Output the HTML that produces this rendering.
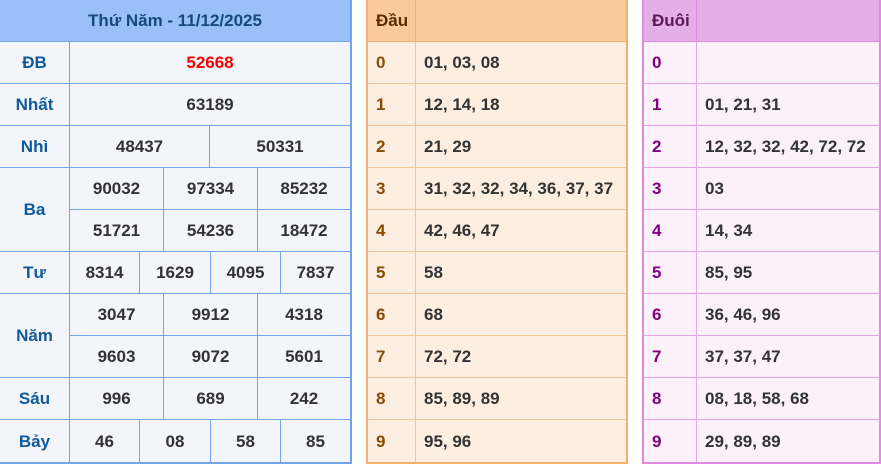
<!DOCTYPE html>
<html><head><meta charset="utf-8"><style>
*{margin:0;padding:0;box-sizing:border-box}
body{width:881px;height:464px;background:#fff;position:relative;overflow:hidden;font-family:"Liberation Sans",Arial,sans-serif;font-weight:bold;font-size:17px;color:#333}
.c{position:absolute;display:flex;align-items:center;justify-content:center;height:42px;border-bottom:1px solid #74a3e9;border-right:1px solid #74a3e9;background:#f3f5fa;padding-top:1px}
.l{color:#0e5a9a}
.h{background:#9bbff8;color:#164a7c}
.o,.p{position:absolute;display:flex;align-items:center;height:42px;padding-top:1px;padding-left:8px}
.o{background:#fdeee2;border-bottom:1px solid #f6c596;border-right:1px solid #f6c596}
.oh{background:#f9cb9c;border-bottom-color:#f5b06e;border-right-color:#f5b06e}
.od{color:#8b4a00}
.p{background:#fcf0fb;border-bottom:1px solid #e7a3e6;border-right:1px solid #e7a3e6}
.ph{background:#e4aee6;border-bottom-color:#e08ae0;border-right-color:#e08ae0}
.pd{color:#800080}
</style></head><body>
<div style="position:absolute;left:350px;top:0;width:2px;height:464px;background:#74a3e9"></div>
<div style="position:absolute;left:0;top:462px;width:352px;height:2px;background:#74a3e9"></div>
<div class="c h" style="left:0;top:0;width:350px;border-right:none">Thứ Năm - 11/12/2025</div>

<div class="c l" style="left:0;top:42px;width:70px">ĐB</div>
<div class="c" style="left:70px;top:42px;width:280px;border-right:none;color:#f00">52668</div>
<div class="c l" style="left:0;top:84px;width:70px">Nhất</div>
<div class="c" style="left:70px;top:84px;width:280px;border-right:none">63189</div>
<div class="c l" style="left:0;top:126px;width:70px">Nhì</div>
<div class="c" style="left:70px;top:126px;width:140px">48437</div>
<div class="c" style="left:210px;top:126px;width:140px;border-right:none">50331</div>
<div class="c l" style="left:0;top:168px;width:70px;height:84px">Ba</div>
<div class="c" style="left:70px;top:168px;width:94px">90032</div>
<div class="c" style="left:164px;top:168px;width:94px">97334</div>
<div class="c" style="left:258px;top:168px;width:92px;border-right:none">85232</div>
<div class="c" style="left:70px;top:210px;width:94px">51721</div>
<div class="c" style="left:164px;top:210px;width:94px">54236</div>
<div class="c" style="left:258px;top:210px;width:92px;border-right:none">18472</div>
<div class="c l" style="left:0;top:252px;width:70px">Tư</div>
<div class="c" style="left:70px;top:252px;width:70px">8314</div>
<div class="c" style="left:140px;top:252px;width:71px">1629</div>
<div class="c" style="left:211px;top:252px;width:70px">4095</div>
<div class="c" style="left:281px;top:252px;width:69px;border-right:none">7837</div>
<div class="c l" style="left:0;top:294px;width:70px;height:84px">Năm</div>
<div class="c" style="left:70px;top:294px;width:94px">3047</div>
<div class="c" style="left:164px;top:294px;width:94px">9912</div>
<div class="c" style="left:258px;top:294px;width:92px;border-right:none">4318</div>
<div class="c" style="left:70px;top:336px;width:94px">9603</div>
<div class="c" style="left:164px;top:336px;width:94px">9072</div>
<div class="c" style="left:258px;top:336px;width:92px;border-right:none">5601</div>
<div class="c l" style="left:0;top:378px;width:70px">Sáu</div>
<div class="c" style="left:70px;top:378px;width:94px">996</div>
<div class="c" style="left:164px;top:378px;width:94px">689</div>
<div class="c" style="left:258px;top:378px;width:92px;border-right:none">242</div>
<div class="c l" style="left:0;top:420px;width:70px;height:42px;border-bottom:none">Bảy</div>
<div class="c" style="left:70px;top:420px;width:70px;border-bottom:none">46</div>
<div class="c" style="left:140px;top:420px;width:71px;border-bottom:none">08</div>
<div class="c" style="left:211px;top:420px;width:70px;border-bottom:none">58</div>
<div class="c" style="left:281px;top:420px;width:69px;border-right:none;border-bottom:none">85</div>

<div style="position:absolute;left:366px;top:0;width:2px;height:464px;background:#f5b06e"></div>
<div style="position:absolute;left:626px;top:0;width:2px;height:464px;background:#f5b06e"></div>
<div style="position:absolute;left:366px;top:462px;width:262px;height:2px;background:#f5b06e"></div>
<div style="position:absolute;left:642px;top:0;width:2px;height:464px;background:#e08ae0"></div>
<div style="position:absolute;left:879px;top:0;width:2px;height:464px;background:#e08ae0"></div>
<div style="position:absolute;left:642px;top:462px;width:239px;height:2px;background:#e08ae0"></div>

<div class="o oh" style="left:368px;top:0;width:48px;color:#5a2d00">Đầu</div>
<div class="o oh" style="left:416px;top:0;width:210px;border-right:none"></div>
<div class="o od" style="left:368px;top:42px;width:48px">0</div><div class="o" style="left:416px;top:42px;width:210px;border-right:none">01, 03, 08</div>
<div class="o od" style="left:368px;top:84px;width:48px">1</div><div class="o" style="left:416px;top:84px;width:210px;border-right:none">12, 14, 18</div>
<div class="o od" style="left:368px;top:126px;width:48px">2</div><div class="o" style="left:416px;top:126px;width:210px;border-right:none">21, 29</div>
<div class="o od" style="left:368px;top:168px;width:48px">3</div><div class="o" style="left:416px;top:168px;width:210px;border-right:none">31, 32, 32, 34, 36, 37, 37</div>
<div class="o od" style="left:368px;top:210px;width:48px">4</div><div class="o" style="left:416px;top:210px;width:210px;border-right:none">42, 46, 47</div>
<div class="o od" style="left:368px;top:252px;width:48px">5</div><div class="o" style="left:416px;top:252px;width:210px;border-right:none">58</div>
<div class="o od" style="left:368px;top:294px;width:48px">6</div><div class="o" style="left:416px;top:294px;width:210px;border-right:none">68</div>
<div class="o od" style="left:368px;top:336px;width:48px">7</div><div class="o" style="left:416px;top:336px;width:210px;border-right:none">72, 72</div>
<div class="o od" style="left:368px;top:378px;width:48px">8</div><div class="o" style="left:416px;top:378px;width:210px;border-right:none">85, 89, 89</div>
<div class="o od" style="left:368px;top:420px;width:48px;border-bottom:none">9</div><div class="o" style="left:416px;top:420px;width:210px;border-right:none;border-bottom:none">95, 96</div>

<div class="p ph" style="left:644px;top:0;width:53px;color:#5a1a5a">Đuôi</div>
<div class="p ph" style="left:697px;top:0;width:182px;border-right:none"></div>
<div class="p pd" style="left:644px;top:42px;width:53px">0</div><div class="p" style="left:697px;top:42px;width:182px;border-right:none"></div>
<div class="p pd" style="left:644px;top:84px;width:53px">1</div><div class="p" style="left:697px;top:84px;width:182px;border-right:none">01, 21, 31</div>
<div class="p pd" style="left:644px;top:126px;width:53px">2</div><div class="p" style="left:697px;top:126px;width:182px;border-right:none">12, 32, 32, 42, 72, 72</div>
<div class="p pd" style="left:644px;top:168px;width:53px">3</div><div class="p" style="left:697px;top:168px;width:182px;border-right:none">03</div>
<div class="p pd" style="left:644px;top:210px;width:53px">4</div><div class="p" style="left:697px;top:210px;width:182px;border-right:none">14, 34</div>
<div class="p pd" style="left:644px;top:252px;width:53px">5</div><div class="p" style="left:697px;top:252px;width:182px;border-right:none">85, 95</div>
<div class="p pd" style="left:644px;top:294px;width:53px">6</div><div class="p" style="left:697px;top:294px;width:182px;border-right:none">36, 46, 96</div>
<div class="p pd" style="left:644px;top:336px;width:53px">7</div><div class="p" style="left:697px;top:336px;width:182px;border-right:none">37, 37, 47</div>
<div class="p pd" style="left:644px;top:378px;width:53px">8</div><div class="p" style="left:697px;top:378px;width:182px;border-right:none">08, 18, 58, 68</div>
<div class="p pd" style="left:644px;top:420px;width:53px;border-bottom:none">9</div><div class="p" style="left:697px;top:420px;width:182px;border-right:none;border-bottom:none">29, 89, 89</div>
</body></html>
